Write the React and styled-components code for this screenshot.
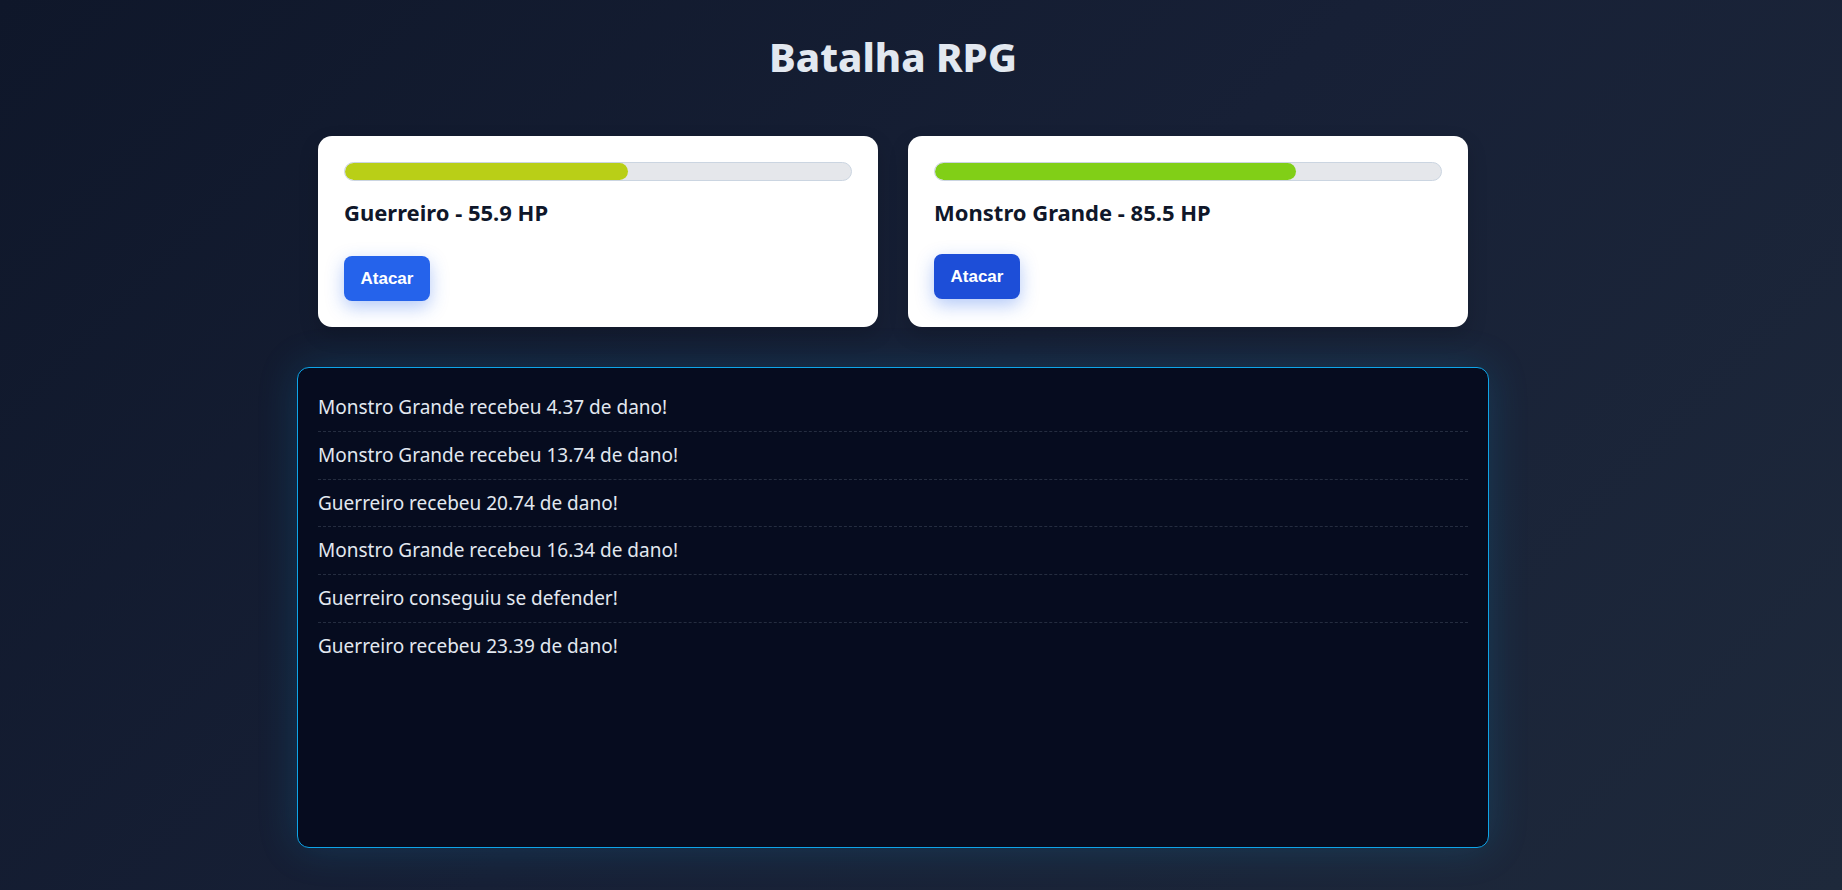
import React from "react";
import styled, { createGlobalStyle } from "styled-components";

const GlobalStyle = createGlobalStyle`
  html, body {
    margin: 0;
    padding: 0;
  }
  body {
    font-family: "Segoe UI", "Noto Sans", sans-serif;
    background: #0f172a;
  }
`;

const fighters = [
  { name: "Guerreiro", hp: 55.9, maxHp: 100, active: false },
  { name: "Monstro Grande", hp: 85.5, maxHp: 120, active: true }
];

const log = [
  "Monstro Grande recebeu 4.37 de dano!",
  "Monstro Grande recebeu 13.74 de dano!",
  "Guerreiro recebeu 20.74 de dano!",
  "Monstro Grande recebeu 16.34 de dano!",
  "Guerreiro conseguiu se defender!",
  "Guerreiro recebeu 23.39 de dano!"
];

/**
 * Card for one fighter: health bar, name with HP and the attack button.
 * The bar colour goes from red to green with the share of HP left.
 */
const FighterCard = ({ fighter }) => {
  const pct = (fighter.hp / fighter.maxHp) * 100;
  return (
    <Card>
      <HealthBar>
        <HealthFill
          style={{ width: `${pct}%`, background: `hsl(${pct * 1.2}, 80%, 45%)` }}
        />
      </HealthBar>
      <FighterName>
        {fighter.name} - {fighter.hp} HP
      </FighterName>
      <AttackButton active={fighter.active}>Atacar</AttackButton>
    </Card>
  );
};

const App = () => (
  <Page>
    <GlobalStyle />
    <Main>
      <Title>Batalha RPG</Title>
      <CardsRow>
        {fighters.map(f => (
          <FighterCard key={f.name} fighter={f} />
        ))}
      </CardsRow>
      <LogBox>
        {log.map((entry, i) => (
          <LogEntry key={i}>{entry}</LogEntry>
        ))}
      </LogBox>
    </Main>
  </Page>
);

const Page = styled.div`
  min-height: 100vh;
  box-sizing: border-box;
  padding: 32.5px 56px 42px 0;
  background: linear-gradient(135deg, #0f172a 0%, #172036 50%, #1e293b 100%);
`;

const Main = styled.main`
  width: 1192px;
  margin: 0 auto;
`;

const Title = styled.h1`
  margin: 0;
  text-align: center;
  font-size: 40px;
  line-height: 48px;
  font-weight: 800;
  color: #e2e8f0;
`;

const CardsRow = styled.div`
  display: flex;
  gap: 30px;
  padding: 0 21px;
  margin-top: 55.5px;
`;

const Card = styled.div`
  flex: 1;
  box-sizing: border-box;
  padding: 26px;
  background: #ffffff;
  border-radius: 14px;
  box-shadow: 0 8px 20px rgba(0, 0, 0, 0.15);
`;

const HealthBar = styled.div`
  height: 19px;
  box-sizing: border-box;
  border: 1px solid #cbd5e1;
  border-radius: 999px;
  background: #e5e7eb;
  overflow: hidden;
`;

const HealthFill = styled.div`
  height: 100%;
  border-radius: 999px;
`;

const FighterName = styled.h3`
  margin: 15.5px 0 29.5px;
  font-size: 22px;
  line-height: 30px;
  font-weight: 700;
  color: #0f172a;
`;

const AttackButton = styled.button`
  display: block;
  height: 45px;
  padding: 0 16.5px;
  border: none;
  border-radius: 8px;
  background: ${props => (props.active ? "#1d4ed8" : "#2563eb")};
  color: #ffffff;
  font-family: "Liberation Sans", Arial, sans-serif;
  font-size: 17px;
  font-weight: 700;
  cursor: pointer;
  transform: ${props => (props.active ? "translateY(-2px)" : "none")};
  box-shadow: 0 6px 18px rgba(37, 99, 235, 0.35);
`;

const LogBox = styled.div`
  margin-top: 40px;
  height: 481px;
  box-sizing: border-box;
  padding: 16px 20px;
  background: #060c1f;
  border: 1px solid #0ea5e9;
  border-radius: 12px;
  box-shadow: 0 0 40px rgba(14, 165, 233, 0.18);
`;

const LogEntry = styled.div`
  padding: 10px 0;
  font-size: 19px;
  line-height: 26.75px;
  color: #e2e8f0;
  border-bottom: 1px dashed rgba(148, 163, 184, 0.22);

  &:last-child {
    border-bottom: none;
  }
`;

export default App;
